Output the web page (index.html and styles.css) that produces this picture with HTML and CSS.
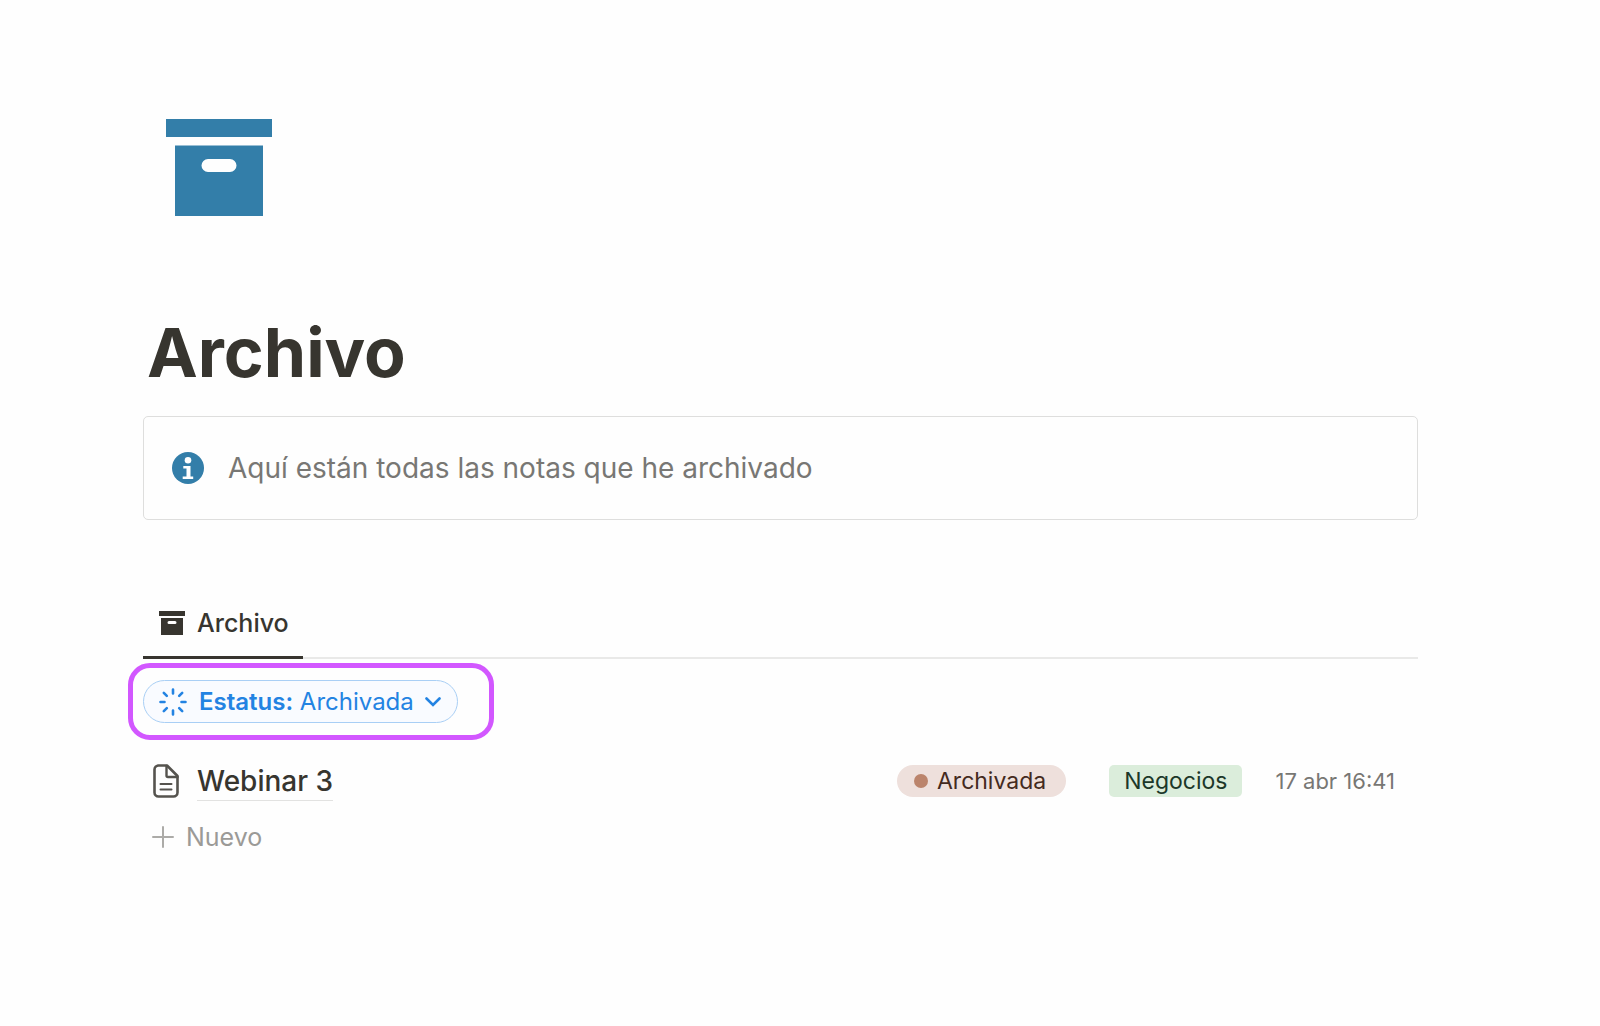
FILE: index.html
```html
<!DOCTYPE html>
<html lang="es">

<head>
	<meta charset="UTF-8">
	<meta name="viewport" content="width=device-width, initial-scale=1.0">
	<title>Archivo</title>
	<link rel="stylesheet" href="styles.css">
</head>

<body>
	<main class="page">
		<svg class="page-icon" viewBox="0 0 106 97" aria-hidden="true">
			<path d="M0 0h106v18H0z" />
			<path fill-rule="evenodd" d="M9 26.500h88v70.500H9zM42 40a6.500 6.500 0 0 0 0 13h22a6.500 6.500 0 0 0 0-13z" />
		</svg>
		<h1 class="page-title">Archivo</h1>

		<div class="callout">
			<svg class="callout-icon" viewBox="0 0 32 32" aria-hidden="true">
				<circle cx="16" cy="16" r="16" fill="#337ea9" />
				<circle cx="16" cy="8.300" r="3.300" fill="#fff" />
				<path d="M11.300 14h7.200v10.500h2.700v2.500H10.700v-2.500h3.800v-8h-3.200z" fill="#fff" />
			</svg>
			<p class="callout-text">Aquí están todas las notas que he archivado</p>
		</div>

		<nav class="tabs">
			<a class="tab" href="#archivo">
				<svg class="tab-icon" viewBox="0 0 26 24" aria-hidden="true">
					<path d="M0 0h26v5H0z" />
					<path fill-rule="evenodd" d="M2 7h22v17H2zM10 10a1.500 1.500 0 0 0 0 3h6a1.500 1.500 0 0 0 0-3z" />
				</svg>
				Archivo
			</a>
		</nav>

		<div class="filters">
			<button class="filter">
				<svg class="filter-icon" viewBox="0 0 28 28" aria-hidden="true">
					<path d="M14 1.500v4M14 22.500v4M1.500 14h4M22.500 14h4M4.800 4.800l3 3M20.200 20.200l3 3M23.200 4.800l-3 3M7.800 20.200l-3 3" />
				</svg>
				<span><b>Estatus:</b> Archivada</span>
				<svg class="filter-arrow" viewBox="0 0 16 10" aria-hidden="true">
					<path d="M1.500 1.500L8 8l6.500-6.500" />
				</svg>
			</button>
		</div>

		<div class="row">
			<a class="row-link" href="#webinar-3">
				<svg class="row-icon" viewBox="0 0 26 34" aria-hidden="true">
					<path d="M5 1.500h9L24.500 12v16.500a4 4 0 0 1-4 4h-15a4 4 0 0 1-4-4V5.500a4 4 0 0 1 4-4z" stroke-width="2.600" />
					<path d="M13.500 2v9.500a1.500 1.500 0 0 0 1.500 1.500h9.500" stroke-width="2.400" />
					<path d="M7.500 20h11M7.500 25.500h11" stroke-width="2" />
				</svg>
				<span class="row-title">Webinar 3</span>
			</a>
			<span class="status">Archivada</span>
			<span class="tag">Negocios</span>
			<time class="date">17 abr 16:41</time>
		</div>

		<button class="new">
			<svg class="new-icon" viewBox="0 0 22 22" aria-hidden="true">
				<path d="M11 1v20M1 11h20" />
			</svg>
			Nuevo
		</button>
	</main>
</body>

</html>
```

FILE: styles.css
```css
* {
	box-sizing: border-box;
	font-family: 'Inter', sans-serif;
}

body {
	margin: 0;
	background-color: #fefefe;
	color: #37352f;
}

button {
	border: none;
	background: none;
	cursor: pointer;
}

a {
	color: inherit;
	text-decoration: none;
}

.page {
	padding: 119px 182px 0 143px;
}

.page-icon {
	display: block;
	width: 106px;
	margin-left: 23px;
	fill: #337ea9;
}

.page-title {
	margin: 92px 0 20px 4px;
	font-size: 68px;
	line-height: 88px;
	font-weight: 700;
}

.callout {
	display: flex;
	align-items: center;
	gap: 24px;
	height: 104px;
	padding: 0 28px;
	border: 1px solid #dededd;
	border-radius: 5px;
}

.callout-icon {
	width: 32px;
}

.callout-text {
	margin: 0;
	font-size: 28px;
	color: #787774;
}

.tabs {
	display: flex;
	margin-top: 68px;
	box-shadow: inset 0 -2px #e9e9e8;
}

.tab {
	display: flex;
	align-items: center;
	gap: 12px;
	height: 71px;
	padding: 2px 14px 0 16px;
	border-bottom: 3px solid #37352f;
	font-size: 25px;
	font-weight: 500;
}

.tab-icon {
	width: 26px;
	fill: #37352f;
}

.filters {
	display: flex;
	margin-top: 21px;
}

.filter {
	position: relative;
	display: flex;
	align-items: center;
	height: 43px;
	padding: 0 16px 0 15px;
	border: 1px solid #a9cff5;
	border-radius: 22px;
	background-color: #f9fbff;
	font-size: 24px;
	color: #2383e2;
}

/* purple frame around the filter */
.filter::after {
	content: "";
	position: absolute;
	inset: -18px -37px -18px -16px;
	border: 5px solid #d257ff;
	border-radius: 22px;
	pointer-events: none;
}

.filter b {
	font-weight: 600;
}

.filter svg {
	fill: none;
	stroke: #2383e2;
	stroke-width: 2.6;
	stroke-linecap: round;
}

.filter-icon {
	width: 28px;
	margin-right: 12px;
}

.filter-arrow {
	width: 16px;
	margin-left: 11px;
}

.row {
	display: flex;
	align-items: center;
	height: 64px;
	margin-top: 26px;
	padding: 0 23px 0 10px;
}

.row-link {
	display: flex;
	align-items: center;
	gap: 18px;
	margin-right: auto;
}

.row-icon {
	width: 26px;
	fill: none;
	stroke: #55534e;
	stroke-linecap: round;
	stroke-linejoin: round;
}

.row-title {
	border-bottom: 1px solid #e2e2e1;
	font-size: 28px;
	line-height: 38px;
	font-weight: 500;
}

.status,
.tag {
	display: flex;
	align-items: center;
	height: 32px;
	font-size: 23px;
}

.status {
	gap: 9px;
	padding: 0 20px 0 17px;
	border-radius: 16px;
	background-color: #eee0dc;
	color: #442a1e;
}

.status::before {
	content: "";
	width: 14px;
	height: 14px;
	border-radius: 50%;
	background-color: #bb846c;
}

.tag {
	margin-left: 43px;
	padding: 0 15px;
	border-radius: 5px;
	background-color: #dbeddb;
	color: #1c3829;
}

.date {
	margin-left: 33px;
	font-size: 22px;
	color: #787774;
}

.new {
	display: flex;
	align-items: center;
	gap: 12px;
	height: 48px;
	padding: 0 9px;
	font-size: 25px;
	color: #9b9a97;
}

.new-icon {
	width: 22px;
	stroke: #acaba8;
	stroke-width: 2;
	stroke-linecap: round;
}
```
